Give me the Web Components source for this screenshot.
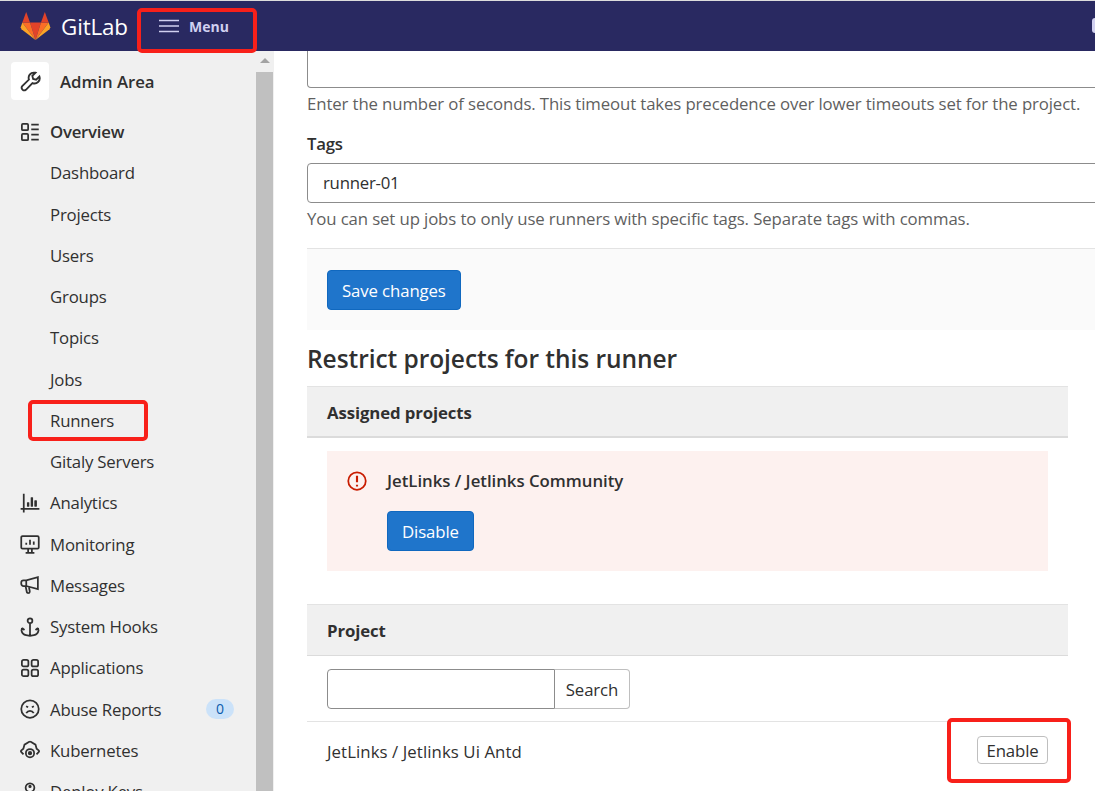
<!DOCTYPE html>
<html>
<head>
<meta charset="utf-8">
<title>Runner</title>
<style>
  html, body { margin: 0; height: 100%; overflow: hidden; background: #fff; }
  body { font-family: "Open Sans", "Noto Sans", sans-serif; color: #303030; }
</style>
</head>
<body>
<runner-page></runner-page>

<script>
const ICONS = {
  admin: '<path d="M10.8 1.2a4 4 0 0 0-4 5.300L1.700 11.500a2 2 0 0 0 2.800 2.800l5-5.100a4 4 0 0 0 5.300-5l-2.500 2.400-2.300-.6-.6-2.300 2.400-2.400a4 4 0 0 0-1-.1z"/>',
  overview: '<rect x="1.500" y="1.500" width="5" height="5" rx=".8"/><rect x="1.500" y="9.500" width="5" height="5" rx=".8"/><path d="M9 2h6M9 5.900h6M9 10h6M9 14h6"/>',
  analytics: '<path d="M3 .5v15M.5 12.700h15M6.500 10.700V7.500M9.500 10.700V3.500M12.500 10.700V6" /><path d="M6.500 10.700V7.500M9.500 10.700V3.500M12.500 10.700V6" stroke-width="1.900"/>',
  monitoring: '<rect x="1" y="1.700" width="14" height="10" rx="1"/><path d="M4.500 15h7M6.500 12v3M9.500 12v3M5 8.500V7M8 8.500V4.500M11 8.500V6"/>',
  messages: '<path d="M14.300 1.800v9.400L5 8.800H2.800A1.800 1.800 0 0 1 1 7V6a1.800 1.800 0 0 1 1.800-1.800H5z"/><path d="M4.500 9l.9 4.400a1.200 1.200 0 0 0 2.400-.4L7.200 9.800M5 4.200v4.600"/>',
  hooks: '<circle cx="8" cy="2.900" r="1.900"/><path d="M8 5v9.500M1.600 8.800l-.4 2a4.600 4.600 0 0 0 3.700 3.700L8 15l3.100-.5a4.600 4.600 0 0 0 3.700-3.700l-.4-2M1.600 8.800l2 1.600M14.400 8.800l-2 1.600"/>',
  applications: '<rect x="1.500" y="1.500" width="5.200" height="5.200" rx="1.400"/><rect x="9.300" y="1.500" width="5.200" height="5.200" rx="1.400"/><rect x="1.500" y="9.300" width="5.200" height="5.200" rx="1.400"/><rect x="9.300" y="9.300" width="5.200" height="5.200" rx="1.400"/>',
  abuse: '<circle cx="8" cy="8" r="7"/><path d="M5 11.300c.7-1.200 1.700-1.800 3-1.800s2.300.6 3 1.800M4.900 5.800l1.600.8M11.100 5.800l-1.600.8"/>',
  kubernetes: '<path d="M2.800 11.500 1.100 9.700a1 1 0 0 1 0-1.400L2.700 7l.9-3.300L7.400 1.500a1 1 0 0 1 1.200 0l3.800 2.200.9 3.300 1.600 1.300a1 1 0 0 1 0 1.400l-1.700 1.800"/><circle cx="8" cy="10.500" r="3.300"/><circle cx="8" cy="10.500" r="1" fill="currentColor"/>',
  deploy: '<circle cx="8" cy="4.500" r="3.500"/><path d="M8 8v6.500M8 12h3"/><circle cx="8" cy="3.500" r=".6" fill="currentColor"/>'
};

class GlHeader extends HTMLElement {
  constructor() {
    super();
    this.attachShadow({ mode: 'open' });
    this.shadowRoot.innerHTML = `
      <style>
        :host { display: flex; align-items: center; height: 50px; background: #292961; border-top: 1px solid #dcdcdc; color: #fff; position: relative; overflow: hidden; }
        .logo { margin-left: 20px; width: 31px; height: 28px; flex: none; }
        .name { margin-left: 10px; font-size: 22.400px; width: 77px; letter-spacing: -.15px; }
        .menu { display: flex; align-items: center; gap: 10px; margin-left: 21px; color: #d1d0f0; font-size: 14px; font-weight: 700; }
        .menu svg { display: block; }
        .spacer { flex: 1; }
        .stub { width: 3px; height: 15px; margin-bottom: 2px; background: #d1d0f0; border-radius: 3px 0 0 3px; }
      </style>
      <svg class="logo" viewBox="0 0 30 28">
        <polygon points="15,28 9.500,10.500 20.500,10.500" fill="#e24329"/>
        <polygon points="15,28 9.500,10.500 1.800,10.500" fill="#fc6d26"/>
        <polygon points="15,28 20.500,10.500 28.200,10.500" fill="#fc6d26"/>
        <polygon points="1.800,10.500 9.500,10.500 5.700,0" fill="#e24329"/>
        <polygon points="28.200,10.500 20.500,10.500 24.300,0" fill="#e24329"/>
        <polygon points="1.800,10.500 .2,15.200 1,17.200 15,28" fill="#fca326"/>
        <polygon points="28.200,10.500 29.800,15.200 29,17.200 15,28" fill="#fca326"/>
      </svg>
      <span class="name">GitLab</span>
      <span class="menu">
        <svg width="20" height="14" viewBox="0 0 20 14" fill="none" stroke="#d1d0f0" stroke-width="1.500"><path d="M0 1.500h20M0 7h20M0 12.500h20"/></svg>
        Menu
      </span>
      <span class="spacer"></span>
      <span class="stub"></span>
    `;
  }
}

class GlNavItem extends HTMLElement {
  constructor() {
    super();
    this.attachShadow({ mode: 'open' });
    const icon = this.getAttribute('icon');
    this.shadowRoot.innerHTML = `
      <style>
        :host { display: flex; align-items: center; height: 41.250px; padding-left: 20px; font-size: 16.800px; color: #303030; letter-spacing: -.2px; white-space: nowrap; }
        :host([bold]) { font-weight: 600; letter-spacing: -.25px; }
        :host([sub]) { padding-left: 50px; }
        svg { width: 20px; height: 20px; margin-right: 10px; flex: none; fill: none; stroke: #303030; stroke-width: 1.400; }
        .count { margin-left: auto; margin-right: 22px; background: #cbe2f9; color: #0b5cad; border-radius: 10px; width: 28px; height: 20px; font-size: 14px; line-height: 20px; text-align: center; }
      </style>
      ${icon ? `<svg viewBox="0 0 16 16">${ICONS[icon]}</svg>` : ''}
      <slot></slot>
      ${this.hasAttribute('count') ? `<span class="count">${this.getAttribute('count')}</span>` : ''}
    `;
  }
}

class GlSidebar extends HTMLElement {
  constructor() {
    super();
    this.attachShadow({ mode: 'open' });
    this.shadowRoot.innerHTML = `
      <style>
        :host { display: flex; width: 274px; height: 740px; background: #f0f0f0; overflow: hidden; flex: none; }
        .nav { width: 256px; flex: none; }
        .context { display: flex; align-items: center; gap: 11px; padding: 11px 11px 11px; height: 38px; font-size: 16.800px; font-weight: 600; letter-spacing: -.05px; }
        .tile { width: 38px; height: 38px; background: #fff; border-radius: 4px; display: flex; align-items: center; justify-content: center; }
        .tile svg { width: 21px; height: 21px; fill: none; stroke: #303030; stroke-width: 1.400; }
        .track { width: 17px; flex: none; display: flex; flex-direction: column; align-items: center; }
        .arrow { height: 21px; width: 17px; display: flex; justify-content: center; padding-top: 7px; box-sizing: border-box; }
        .arrow i { width: 0; height: 0; border: 5px solid transparent; border-top: 0; border-bottom: 5px solid #a3a3a3; }
        .thumb { flex: 1; width: 17px; background: #c0c0c0; }
      </style>
      <div class="nav">
        <div class="context">
          <span class="tile"><svg viewBox="0 0 16 16">${ICONS.admin}</svg></span>
          Admin Area
        </div>
        <slot></slot>
      </div>
      <div class="track"><div class="arrow"><i></i></div><div class="thumb"></div></div>
    `;
  }
}

class GlButton extends HTMLElement {
  constructor() {
    super();
    this.attachShadow({ mode: 'open' });
    this.shadowRoot.innerHTML = `
      <style>
        :host { display: inline-flex; align-items: center; justify-content: center; height: 40px; padding: 0 14px; box-sizing: border-box; background: #1f75cb; border: 1px solid #1068bf; border-radius: 4px; color: #fff; font-size: 16.800px; letter-spacing: -.12px; white-space: nowrap; }
        :host([plain]) { background: #fff; border-color: #bfbfbf; color: #303030; }
        :host([small]) { height: 28px; width: 71px; padding: 0; font-size: 16.800px; margin-top: -2px; }
      </style>
      <slot></slot>
    `;
  }
}

class GlField extends HTMLElement {
  constructor() {
    super();
    this.attachShadow({ mode: 'open' });
    this.shadowRoot.innerHTML = `
      <style>
        :host { display: block; width: 820px; box-sizing: border-box; height: 40px; padding-left: 15px; line-height: 38px; border: 1px solid #8c8c8c; border-radius: 4px; font-size: 16.800px; letter-spacing: -.25px; background: #fff; }
        :host([cut]) { height: 37px; border-top: 0; border-radius: 0 0 4px 4px; }
      </style>
      <slot></slot>
    `;
  }
}

class GlSectionHead extends HTMLElement {
  constructor() {
    super();
    this.attachShadow({ mode: 'open' });
    this.shadowRoot.innerHTML = `
      <style>
        :host { display: flex; align-items: center; height: 52px; box-sizing: border-box; padding: 2px 0 0 20px; background: #f0f0f0; border-top: 1px solid #e3e3e3; border-bottom: 2px solid #dbdbdb; font-size: 16.800px; font-weight: 700; letter-spacing: -.12px; }
        :host([thin]) { border-bottom-width: 1px; padding-top: 0; }
      </style>
      <slot></slot>
    `;
  }
}

class GlAlert extends HTMLElement {
  constructor() {
    super();
    this.attachShadow({ mode: 'open' });
    this.shadowRoot.innerHTML = `
      <style>
        :host { display: flex; margin: 13px 20px 0; height: 120px; box-sizing: border-box; padding: 20px 20px 0; background: #fdf1ef; }
        svg { width: 20px; height: 20px; flex: none; margin-right: 20px; fill: none; stroke: #c91c00; stroke-width: 1.400; }
        .title { height: 20px; line-height: 20px; font-size: 16.800px; font-weight: 600; letter-spacing: -.02px; margin-bottom: 20px; }
      </style>
      <svg viewBox="0 0 16 16"><circle cx="8" cy="8" r="7"/><path d="M8 3.800v5.200M8 10.900v1.500" stroke-width="1.700"/></svg>
      <div>
        <div class="title"><slot name="title"></slot></div>
        <slot></slot>
      </div>
    `;
  }
}

class RunnerForm extends HTMLElement {
  constructor() {
    super();
    this.attachShadow({ mode: 'open' });
    this.shadowRoot.innerHTML = `
      <style>
        :host { display: block; flex: 1; min-width: 0; padding-left: 33px; font-size: 16.800px; letter-spacing: -.25px; overflow: hidden; }
        .help { color: #5f5f5f; height: 33px; line-height: 32px; white-space: nowrap; letter-spacing: -.12px; }
        .label { font-weight: 600; height: 26px; line-height: 26px; margin: 10px 0 6px; }
        .actions { width: 820px; height: 82px; margin-top: 12px; box-sizing: border-box; padding: 21px 20px; background: #fafafa; border-top: 1px solid #e3e3e3; }
        h2 { margin: 12px 0 11px; height: 33px; line-height: 33px; font-size: 24.500px; font-weight: 600; letter-spacing: -.06px; }
        .panel { width: 761px; }
        .search { display: flex; padding: 13px 20px 12px; }
        .search .box { width: 228px; height: 40px; box-sizing: border-box; border: 1px solid #8c8c8c; border-radius: 4px 0 0 4px; }
        .search gl-button { border-left: 0; border-radius: 0 4px 4px 0; width: 75px; padding: 0; }
        .row { display: flex; align-items: center; justify-content: space-between; height: 58px; padding: 0 20px; border-top: 1px solid #e3e3e3; letter-spacing: .08px; }
      </style>
      <gl-field cut></gl-field>
      <div class="help">Enter the number of seconds. This timeout takes precedence over lower timeouts set for the project.</div>
      <div class="label">Tags</div>
      <gl-field>runner-01</gl-field>
      <div class="help">You can set up jobs to only use runners with specific tags. Separate tags with commas.</div>
      <div class="actions"><gl-button>Save changes</gl-button></div>
      <h2>Restrict projects for this runner</h2>
      <div class="panel">
        <gl-section-head>Assigned projects</gl-section-head>
        <gl-alert>
          <span slot="title">JetLinks / Jetlinks Community</span>
          <gl-button>Disable</gl-button>
        </gl-alert>
        <gl-section-head thin style="margin-top:33px">Project</gl-section-head>
        <div class="search"><div class="box"></div><gl-button plain>Search</gl-button></div>
        <div class="row"><span>JetLinks / Jetlinks Ui Antd</span><gl-button plain small>Enable</gl-button></div>
      </div>
    `;
  }
}

class MarkBox extends HTMLElement {
  constructor() {
    super();
    this.attachShadow({ mode: 'open' });
    this.shadowRoot.innerHTML = `
      <style>
        :host { display: block; position: absolute; box-sizing: border-box; border: 4px solid #f8201a; border-radius: 5px; pointer-events: none; }
      </style>
    `;
  }
}

class RunnerPage extends HTMLElement {
  constructor() {
    super();
    this.attachShadow({ mode: 'open' });
    this.shadowRoot.innerHTML = `
      <style>
        :host { display: block; position: relative; width: 1095px; height: 791px; overflow: hidden; }
        .body { display: flex; height: 740px; }
        mark-box.menu { left: 137px; top: 8px; width: 120px; height: 45px; }
        mark-box.runners { left: 28px; top: 400px; width: 120px; height: 41px; }
        mark-box.enable { left: 947px; top: 718px; width: 124px; height: 65px; }
      </style>
      <gl-header></gl-header>
      <div class="body">
        <gl-sidebar>
          <gl-nav-item icon="overview" bold>Overview</gl-nav-item>
          <gl-nav-item sub>Dashboard</gl-nav-item>
          <gl-nav-item sub>Projects</gl-nav-item>
          <gl-nav-item sub>Users</gl-nav-item>
          <gl-nav-item sub>Groups</gl-nav-item>
          <gl-nav-item sub>Topics</gl-nav-item>
          <gl-nav-item sub>Jobs</gl-nav-item>
          <gl-nav-item sub>Runners</gl-nav-item>
          <gl-nav-item sub>Gitaly Servers</gl-nav-item>
          <gl-nav-item icon="analytics">Analytics</gl-nav-item>
          <gl-nav-item icon="monitoring">Monitoring</gl-nav-item>
          <gl-nav-item icon="messages">Messages</gl-nav-item>
          <gl-nav-item icon="hooks">System Hooks</gl-nav-item>
          <gl-nav-item icon="applications">Applications</gl-nav-item>
          <gl-nav-item icon="abuse" count="0">Abuse Reports</gl-nav-item>
          <gl-nav-item icon="kubernetes">Kubernetes</gl-nav-item>
          <gl-nav-item icon="deploy">Deploy Keys</gl-nav-item>
        </gl-sidebar>
        <runner-form></runner-form>
      </div>
      <mark-box class="menu"></mark-box>
      <mark-box class="runners"></mark-box>
      <mark-box class="enable"></mark-box>
    `;
  }
}

customElements.define('gl-header', GlHeader);
customElements.define('gl-nav-item', GlNavItem);
customElements.define('gl-sidebar', GlSidebar);
customElements.define('gl-button', GlButton);
customElements.define('gl-field', GlField);
customElements.define('gl-section-head', GlSectionHead);
customElements.define('gl-alert', GlAlert);
customElements.define('runner-form', RunnerForm);
customElements.define('mark-box', MarkBox);
customElements.define('runner-page', RunnerPage);
</script>
</body>
</html>
